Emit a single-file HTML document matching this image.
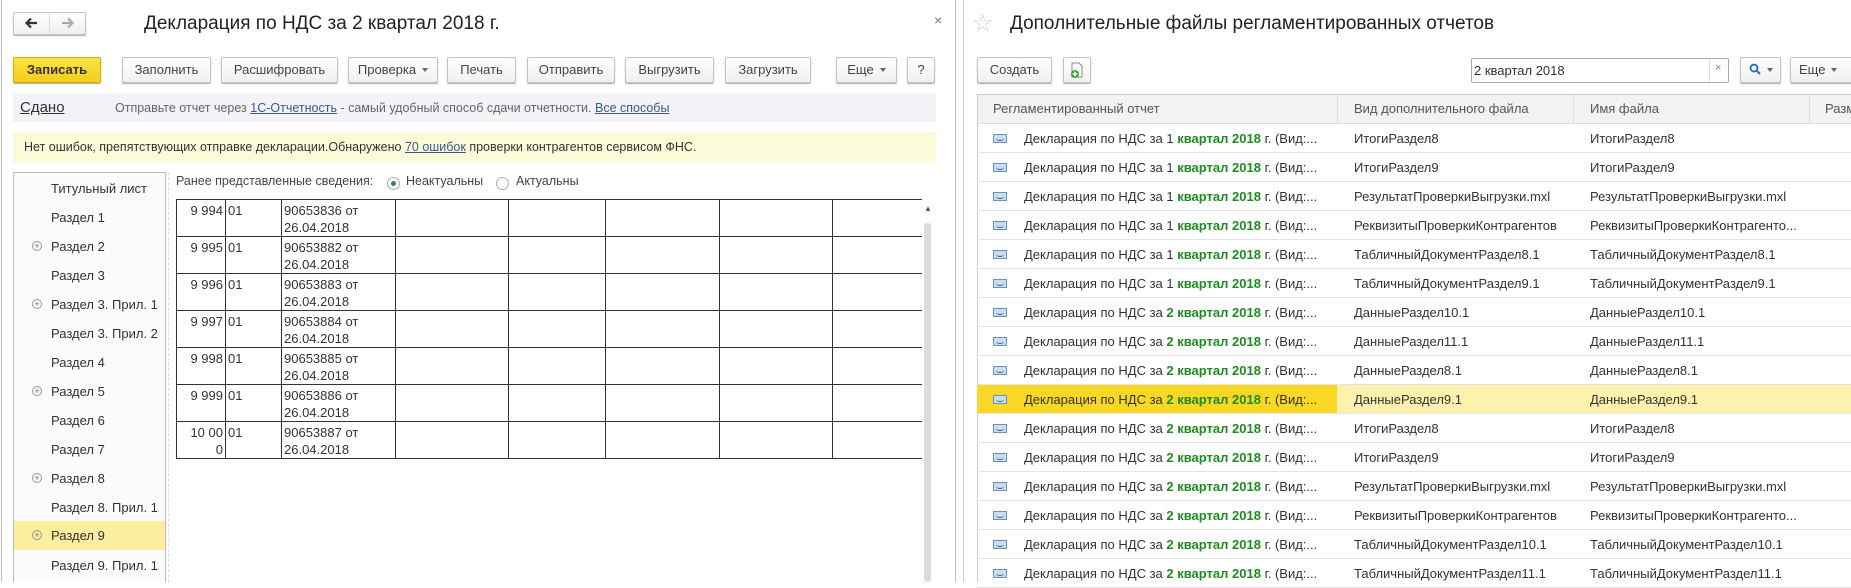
<!DOCTYPE html>
<html><head><meta charset="utf-8"><style>
*{box-sizing:border-box;margin:0;padding:0}
body{width:1851px;height:582px;overflow:hidden;background:#fff;font-family:"Liberation Sans",Arial,sans-serif;font-size:13px;color:#333;position:relative}
.a{position:absolute;white-space:nowrap}
.btn{position:absolute;height:26px;border:1px solid #c4c4c4;border-radius:2px;background:linear-gradient(#fff,#f0f0f0);box-shadow:0 1px 1px #aaa;text-align:center;line-height:24px;color:#444;font-size:13px}
.yel{background:linear-gradient(#fbe24a,#f3cf17);border-color:#d5b000;color:#333}
.dd:after{content:"";display:inline-block;margin-left:6px;border-left:3px solid transparent;border-right:3px solid transparent;border-top:4px solid #666;vertical-align:2px}
.nav{position:absolute;left:14px;width:151px;height:29px;line-height:29px;padding-left:37px;color:#333}
.nav .p{position:absolute;left:18px;top:9px;width:10px;height:10px;border:1px solid #999;border-radius:50%;font-size:9px;line-height:8px;text-align:center;color:#777}
table.t{position:absolute;left:176px;top:199px;border-collapse:collapse}
table.t td{border:1px solid #333;height:37px;vertical-align:top;padding:2px 2px 0;line-height:17px;font-size:13px;color:#333}
.r{position:absolute;left:977px;width:874px;height:29px;border-bottom:1px solid #e4e4e4;line-height:29px}
.r span{position:absolute}
.ic{position:absolute;left:16px;top:10px;width:14px;height:9px;border:1px solid #6d8fb8;background:#c9dcf0}
.ic:after{content:"";position:absolute;left:2px;top:1px;width:8px;height:4px;border-bottom:1px solid #35619a;border-radius:50%}
.g{color:#1f8c1f;font-weight:bold}
</style></head><body>
<div class="a" style="left:1px;top:0;width:1px;height:582px;background:#bbb"></div>
<div class="btn" style="left:13px;top:12px;width:73px;height:23px"></div>
<div class="a" style="left:49px;top:14px;width:1px;height:19px;background:#ddd"></div>
<svg class="a" style="left:24px;top:17px" width="14" height="12" viewBox="0 0 14 12"><path d="M13 6H3M7 1.5L2.5 6 7 10.5" fill="none" stroke="#333" stroke-width="2.2"/></svg>
<svg class="a" style="left:61px;top:17px" width="14" height="12" viewBox="0 0 14 12"><path d="M1 6h10M7 1.5L11.5 6 7 10.5" fill="none" stroke="#aaa" stroke-width="2.2"/></svg>
<div class="a" style="left:144px;top:13px;font-size:19px;color:#222">Декларация по НДС за 2 квартал 2018 г.</div>
<div class="a" style="left:934px;top:12px;font-size:14px;color:#777">×</div>

<div class="btn yel" style="left:13px;top:57px;width:88px"><b style="font-weight:bold">Записать</b></div>
<div class="btn" style="left:122px;top:57px;width:89px">Заполнить</div>
<div class="btn" style="left:221px;top:57px;width:117px">Расшифровать</div>
<div class="btn dd" style="left:348px;top:57px;width:90px">Проверка</div>
<div class="btn" style="left:447px;top:57px;width:69px">Печать</div>
<div class="btn" style="left:527px;top:57px;width:88px">Отправить</div>
<div class="btn" style="left:625px;top:57px;width:89px">Выгрузить</div>
<div class="btn" style="left:725px;top:57px;width:86px">Загрузить</div>
<div class="btn dd" style="left:836px;top:57px;width:61px">Еще</div>
<div class="btn" style="left:907px;top:57px;width:28px">?</div>

<div class="a" style="left:13px;top:93px;width:923px;height:29px;background:#f3f2f6"></div>
<div class="a" style="left:20px;top:99px;font-size:15px;color:#333;text-decoration:underline">Сдано</div>
<div class="a" style="left:115px;top:101px;font-size:12.5px;color:#666">Отправьте отчет через <span style="color:#3a5a8c;text-decoration:underline">1С-Отчетность</span> - самый удобный способ сдачи отчетности. <span style="color:#3a5a8c;text-decoration:underline">Все способы</span></div>
<div class="a" style="left:13px;top:132px;width:923px;height:31px;background:#fcfbd9"></div>
<div class="a" style="left:24px;top:140px;font-size:12.5px;color:#333">Нет ошибок, препятствующих отправке декларации.Обнаружено <span style="color:#3a5a8c;text-decoration:underline">70 ошибок</span> проверки контрагентов сервисом ФНС.</div>

<div class="a" style="left:13px;top:172px;width:153px;height:410px;border:1px solid #bbb;border-bottom:none;background:#fbfafd"></div>
<div class="a" style="left:168px;top:172px;width:0;height:410px;border-left:1px dashed #ddd"></div>
<div class="nav" style="top:174px">Титульный лист</div>
<div class="nav" style="top:203px">Раздел 1</div>
<div class="nav" style="top:232px"><span class="p">+</span>Раздел 2</div>
<div class="nav" style="top:261px">Раздел 3</div>
<div class="nav" style="top:290px"><span class="p">+</span>Раздел 3. Прил. 1</div>
<div class="nav" style="top:319px">Раздел 3. Прил. 2</div>
<div class="nav" style="top:348px">Раздел 4</div>
<div class="nav" style="top:377px"><span class="p">+</span>Раздел 5</div>
<div class="nav" style="top:406px">Раздел 6</div>
<div class="nav" style="top:435px">Раздел 7</div>
<div class="nav" style="top:464px"><span class="p">+</span>Раздел 8</div>
<div class="nav" style="top:493px">Раздел 8. Прил. 1</div>
<div class="nav" style="top:521px;background:#fbee9f"><span class="p">+</span>Раздел 9</div>
<div class="nav" style="top:551px">Раздел 9. Прил. 1</div>

<div class="a" style="left:176px;top:174px;font-size:12.5px;color:#444">Ранее представленные сведения:</div>
<div class="a" style="left:387px;top:177px;width:13px;height:13px;border:1px solid #aaa;border-radius:50%;background:#fff"><div style="position:absolute;left:3px;top:3px;width:5px;height:5px;border-radius:50%;background:#2e8a4a"></div></div>
<div class="a" style="left:406px;top:174px;font-size:12.5px;color:#444">Неактуальны</div>
<div class="a" style="left:496px;top:177px;width:13px;height:13px;border:1px solid #aaa;border-radius:50%"></div>
<div class="a" style="left:516px;top:174px;font-size:12.5px;color:#444">Актуальны</div>

<table class="t">
<colgroup><col style="width:49px"><col style="width:56px"><col style="width:114px"><col style="width:113px"><col style="width:97px"><col style="width:114px"><col style="width:113px"><col style="width:89px"></colgroup>
<tr><td style="text-align:right">9 994</td><td>01</td><td>90653836 от<br>26.04.2018</td><td></td><td></td><td></td><td></td><td style="border-right:none"></td></tr>
<tr><td style="text-align:right">9 995</td><td>01</td><td>90653882 от<br>26.04.2018</td><td></td><td></td><td></td><td></td><td style="border-right:none"></td></tr>
<tr><td style="text-align:right">9 996</td><td>01</td><td>90653883 от<br>26.04.2018</td><td></td><td></td><td></td><td></td><td style="border-right:none"></td></tr>
<tr><td style="text-align:right">9 997</td><td>01</td><td>90653884 от<br>26.04.2018</td><td></td><td></td><td></td><td></td><td style="border-right:none"></td></tr>
<tr><td style="text-align:right">9 998</td><td>01</td><td>90653885 от<br>26.04.2018</td><td></td><td></td><td></td><td></td><td style="border-right:none"></td></tr>
<tr><td style="text-align:right">9 999</td><td>01</td><td>90653886 от<br>26.04.2018</td><td></td><td></td><td></td><td></td><td style="border-right:none"></td></tr>
<tr><td style="text-align:right">10 00<br>0</td><td>01</td><td>90653887 от<br>26.04.2018</td><td></td><td></td><td></td><td></td><td style="border-right:none"></td></tr>
</table>
<div class="a" style="left:924px;top:204px;font-size:8px;color:#555">▲</div>
<div class="a" style="left:924px;top:223px;width:7px;height:359px;background:#dcdcdc;border-radius:3px"></div>

<div class="a" style="left:955px;top:0;width:1px;height:582px;background:#bbb"></div>
<div class="a" style="left:963px;top:0;width:1px;height:582px;background:#ccc"></div>

<div class="a" style="left:972px;top:9px;font-size:24px;color:#ccc">☆</div>
<div class="a" style="left:1010px;top:13px;font-size:19px;color:#222">Дополнительные файлы регламентированных отчетов</div>
<div class="btn" style="left:977px;top:57px;width:75px">Создать</div>
<div class="btn" style="left:1063px;top:57px;width:28px"><svg width="14" height="17" viewBox="0 0 14 17" style="margin-top:4px"><path d="M2 1h7l3 3v11H2z" fill="#fff" stroke="#888"/><circle cx="5" cy="12" r="4" fill="#3a9a3a"/><path d="M5 9.5v5M2.5 12h5" stroke="#fff" stroke-width="1.4"/></svg></div>
<div class="a" style="left:1471px;top:58px;width:258px;height:25px;border:1px solid #aaa;border-radius:2px;background:#fff"></div>
<div class="a" style="left:1709px;top:59px;width:1px;height:23px;background:#ddd"></div>
<div class="a" style="left:1474px;top:63px;font-size:13px;color:#333">2 квартал 2018</div>
<div class="a" style="left:1715px;top:62px;font-size:11px;color:#888">×</div>
<div class="btn dd" style="left:1740px;top:57px;width:41px"><svg width="12" height="12" viewBox="0 0 12 12" style="vertical-align:-1px"><circle cx="5" cy="5" r="3.5" fill="none" stroke="#2a6db0" stroke-width="1.8"/><path d="M7.5 7.5l3.5 3.5" stroke="#2a6db0" stroke-width="2"/></svg></div>
<div class="btn dd" style="left:1790px;top:57px;width:70px;text-align:left;padding-left:8px">Еще</div>

<div class="a" style="left:977px;top:94px;width:874px;height:30px;background:#f2f2f2;border-top:1px solid #ccc;border-bottom:1px solid #ddd;border-left:1px solid #ccc"></div>
<div class="a" style="left:1337px;top:94px;width:1px;height:30px;background:#ddd"></div>
<div class="a" style="left:1573px;top:94px;width:1px;height:30px;background:#ddd"></div>
<div class="a" style="left:1809px;top:94px;width:1px;height:30px;background:#ddd"></div>
<div class="a" style="left:993px;top:101px;color:#555">Регламентированный отчет</div>
<div class="a" style="left:1354px;top:101px;color:#555">Вид дополнительного файла</div>
<div class="a" style="left:1590px;top:101px;color:#555">Имя файла</div>
<div class="a" style="left:1825px;top:101px;color:#555">Разм</div>
<div class="a" style="left:977px;top:124px;width:1px;height:458px;background:#ccc"></div>

<div class="r" style="top:124px"><i class="ic"></i><span style="left:47px">Декларация по НДС за 1 <b class="g">квартал 2018</b> г. (Вид:...</span><span style="left:377px">ИтогиРаздел8</span><span style="left:613px">ИтогиРаздел8</span></div>
<div class="r" style="top:153px"><i class="ic"></i><span style="left:47px">Декларация по НДС за 1 <b class="g">квартал 2018</b> г. (Вид:...</span><span style="left:377px">ИтогиРаздел9</span><span style="left:613px">ИтогиРаздел9</span></div>
<div class="r" style="top:182px"><i class="ic"></i><span style="left:47px">Декларация по НДС за 1 <b class="g">квартал 2018</b> г. (Вид:...</span><span style="left:377px">РезультатПроверкиВыгрузки.mxl</span><span style="left:613px">РезультатПроверкиВыгрузки.mxl</span></div>
<div class="r" style="top:211px"><i class="ic"></i><span style="left:47px">Декларация по НДС за 1 <b class="g">квартал 2018</b> г. (Вид:...</span><span style="left:377px">РеквизитыПроверкиКонтрагентов</span><span style="left:613px">РеквизитыПроверкиКонтрагенто...</span></div>
<div class="r" style="top:240px"><i class="ic"></i><span style="left:47px">Декларация по НДС за 1 <b class="g">квартал 2018</b> г. (Вид:...</span><span style="left:377px">ТабличныйДокументРаздел8.1</span><span style="left:613px">ТабличныйДокументРаздел8.1</span></div>
<div class="r" style="top:269px"><i class="ic"></i><span style="left:47px">Декларация по НДС за 1 <b class="g">квартал 2018</b> г. (Вид:...</span><span style="left:377px">ТабличныйДокументРаздел9.1</span><span style="left:613px">ТабличныйДокументРаздел9.1</span></div>
<div class="r" style="top:298px"><i class="ic"></i><span style="left:47px">Декларация по НДС за <b class="g">2 квартал 2018</b> г. (Вид:...</span><span style="left:377px">ДанныеРаздел10.1</span><span style="left:613px">ДанныеРаздел10.1</span></div>
<div class="r" style="top:327px"><i class="ic"></i><span style="left:47px">Декларация по НДС за <b class="g">2 квартал 2018</b> г. (Вид:...</span><span style="left:377px">ДанныеРаздел11.1</span><span style="left:613px">ДанныеРаздел11.1</span></div>
<div class="r" style="top:356px"><i class="ic"></i><span style="left:47px">Декларация по НДС за <b class="g">2 квартал 2018</b> г. (Вид:...</span><span style="left:377px">ДанныеРаздел8.1</span><span style="left:613px">ДанныеРаздел8.1</span></div>
<div class="r" style="top:385px;background:#fdf2ad"><div style="position:absolute;left:0;top:0;width:360px;height:28px;background:#f8d824"></div><i class="ic"></i><span style="left:47px">Декларация по НДС за <b class="g">2 квартал 2018</b> г. (Вид:...</span><span style="left:377px">ДанныеРаздел9.1</span><span style="left:613px">ДанныеРаздел9.1</span></div>
<div class="r" style="top:414px"><i class="ic"></i><span style="left:47px">Декларация по НДС за <b class="g">2 квартал 2018</b> г. (Вид:...</span><span style="left:377px">ИтогиРаздел8</span><span style="left:613px">ИтогиРаздел8</span></div>
<div class="r" style="top:443px"><i class="ic"></i><span style="left:47px">Декларация по НДС за <b class="g">2 квартал 2018</b> г. (Вид:...</span><span style="left:377px">ИтогиРаздел9</span><span style="left:613px">ИтогиРаздел9</span></div>
<div class="r" style="top:472px"><i class="ic"></i><span style="left:47px">Декларация по НДС за <b class="g">2 квартал 2018</b> г. (Вид:...</span><span style="left:377px">РезультатПроверкиВыгрузки.mxl</span><span style="left:613px">РезультатПроверкиВыгрузки.mxl</span></div>
<div class="r" style="top:501px"><i class="ic"></i><span style="left:47px">Декларация по НДС за <b class="g">2 квартал 2018</b> г. (Вид:...</span><span style="left:377px">РеквизитыПроверкиКонтрагентов</span><span style="left:613px">РеквизитыПроверкиКонтрагенто...</span></div>
<div class="r" style="top:530px"><i class="ic"></i><span style="left:47px">Декларация по НДС за <b class="g">2 квартал 2018</b> г. (Вид:...</span><span style="left:377px">ТабличныйДокументРаздел10.1</span><span style="left:613px">ТабличныйДокументРаздел10.1</span></div>
<div class="r" style="top:559px"><i class="ic"></i><span style="left:47px">Декларация по НДС за <b class="g">2 квартал 2018</b> г. (Вид:...</span><span style="left:377px">ТабличныйДокументРаздел11.1</span><span style="left:613px">ТабличныйДокументРаздел11.1</span></div>
</body></html>
